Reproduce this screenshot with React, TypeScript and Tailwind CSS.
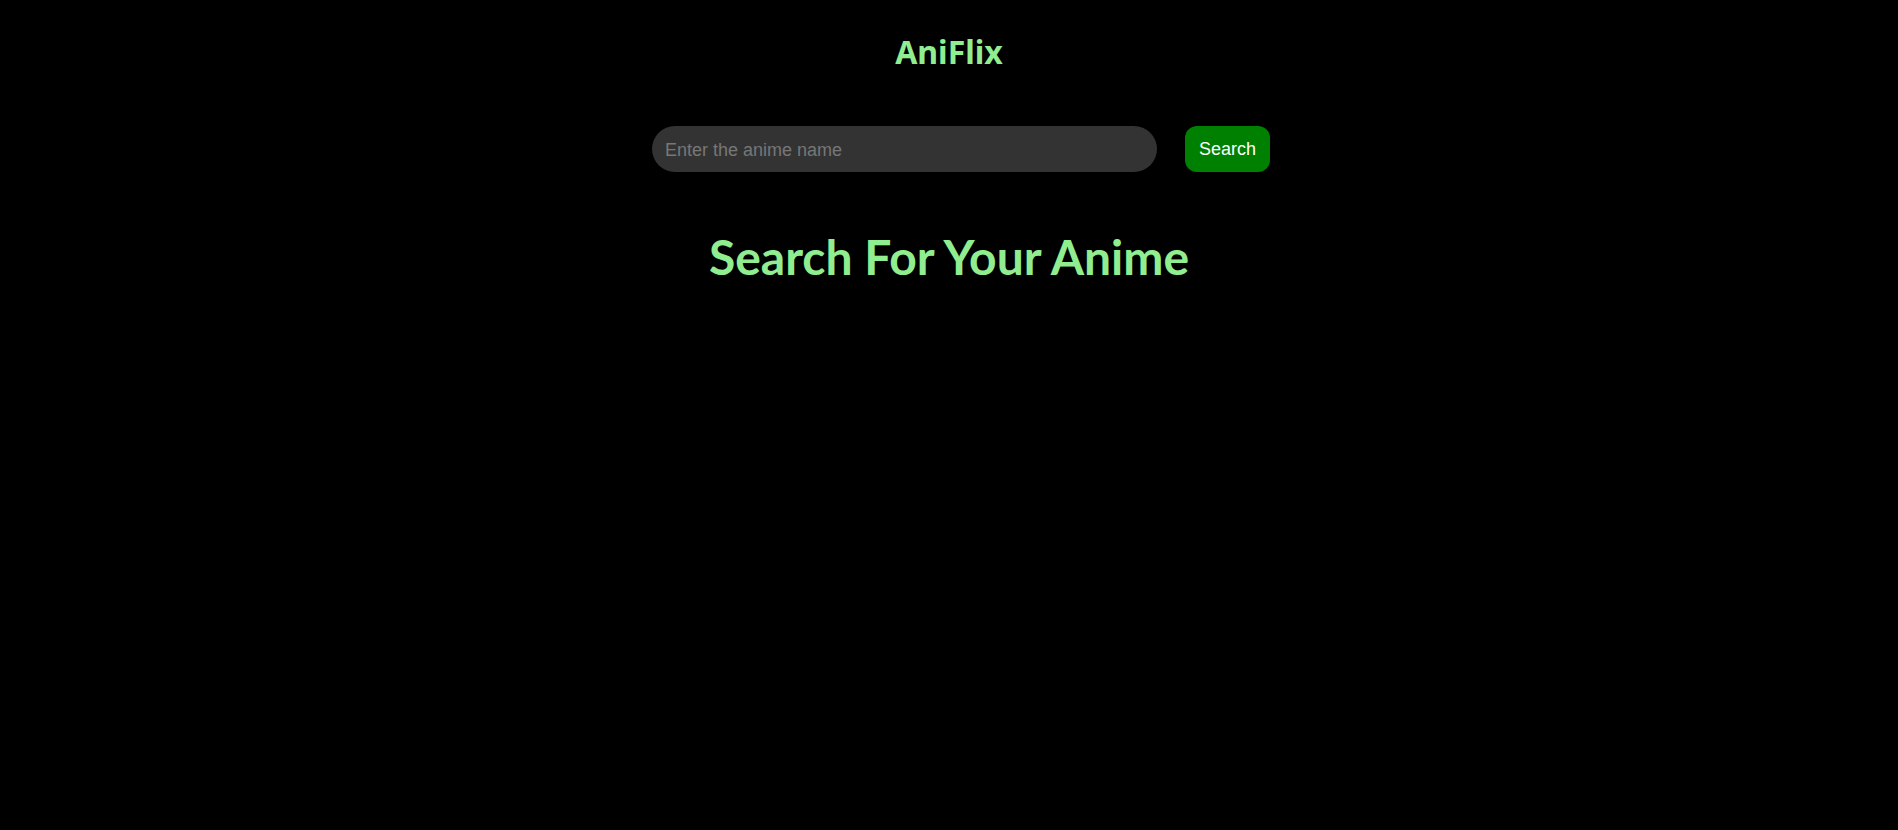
export default function App() {
  return (
    <div className="min-h-screen w-full bg-black flex flex-col items-center">
      <h1 className="pt-[28px] text-[32px] leading-[48px] font-bold text-[#90ee90] font-['Noto_Sans',sans-serif]">
        AniFlix
      </h1>
      <form
        className="mt-[50px] ml-[24px] flex items-center gap-[28px]"
        onSubmit={(e) => e.preventDefault()}
      >
        <input
          type="text"
          placeholder="Enter the anime name"
          className="w-[505px] h-[46px] pt-[2px] rounded-full bg-[#333333] px-[13px] text-[18px] text-white placeholder:text-[#777777] outline-none font-['Liberation_Sans',Arial,sans-serif]"
        />
        <button
          type="submit"
          className="w-[85px] h-[46px] pt-[1px] rounded-[12px] bg-[#008000] text-white text-[18px] font-['Liberation_Sans',Arial,sans-serif]"
        >
          Search
        </button>
      </form>
      <h2 className="mt-[56px] text-[48px] leading-[58px] font-bold text-[#90ee90] font-['Lato',sans-serif]">
        Search For Your Anime
      </h2>
    </div>
  );
}
